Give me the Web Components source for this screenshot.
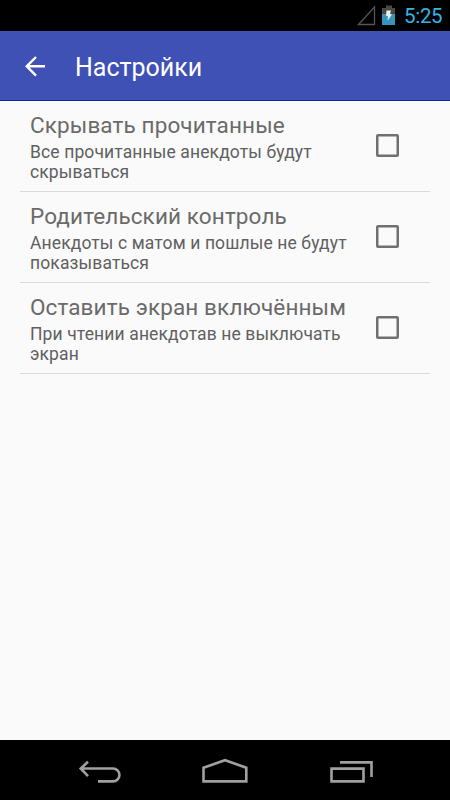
<!DOCTYPE html>
<html lang="ru">
<head>
<meta charset="utf-8">
<title>Настройки</title>
<style>
    html, body {
        margin: 0;
        height: 100%;
    }
    body {
        background-color: #fafafa;
        font-family: Roboto, "Noto Sans", sans-serif;
    }
</style>
</head>
<body>
<settings-screen>
    <status-bar slot="top" time="5:25"></status-bar>
    <app-bar slot="top">Настройки</app-bar>
    <setting-item>
        Скрывать прочитанные
        <span slot="text">Все прочитанные анекдоты будут скрываться</span>
    </setting-item>
    <setting-item>
        Родительский контроль
        <span slot="text">Анекдоты с матом и пошлые не будут показываться</span>
    </setting-item>
    <setting-item>
        Оставить экран включённым
        <span slot="text">При чтении анекдотав не выключать экран</span>
    </setting-item>
    <nav-bar slot="bottom"></nav-bar>
</settings-screen>

<script>
class SettingsScreen extends HTMLElement {
    constructor() {
        super();
        this.attachShadow({mode: "open"});
        this.shadowRoot.innerHTML = `
            <style>
                :host {
                    display: flex;
                    flex-direction: column;
                    height: 100vh;
                    overflow: hidden;
                }
                main {
                    flex: 1;
                    padding: 0 20px;
                }
            </style>
            <slot name="top"></slot>
            <main><slot></slot></main>
            <slot name="bottom"></slot>
        `;
    }
}

class StatusBar extends HTMLElement {
    constructor() {
        super();
        this.attachShadow({mode: "open"});
        this.shadowRoot.innerHTML = `
            <style>
                :host {
                    display: flex;
                    justify-content: flex-end;
                    align-items: center;
                    box-sizing: border-box;
                    height: 31px;
                    padding-right: 8px;
                    background-color: #000;
                    color: #33b5e5;
                }
                svg {
                    display: block;
                }
                .time {
                    width: 38px;
                    margin-left: 9px;
                    font-size: 20.5px;
                    line-height: 31px;
                    padding-top: 2px;
                    letter-spacing: -0.3px;
                }
            </style>
            <svg width="38" height="31" viewBox="357 0 38 31">
                <path d="M358.5 24.5 L374.5 7 V24.5 Z" fill="none" stroke="#555" stroke-width="1.3"/>
                <path d="M386 5.5h6v2.500h3v6h-13v-6h4z" fill="#484848"/>
                <path d="M382 14h13v11h-13z" fill="#3695bd"/>
                <path d="M386.500 10.500h4.500l-1 3.500 2 .4-4.500 6.300.5-4.500-2-.4z" fill="#eee"/>
            </svg>
            <span class="time">${this.getAttribute("time")}</span>
        `;
    }
}

class AppBar extends HTMLElement {
    constructor() {
        super();
        this.attachShadow({mode: "open"});
        this.shadowRoot.innerHTML = `
            <style>
                :host {
                    display: flex;
                    align-items: center;
                    box-sizing: border-box;
                    height: 70px;
                    padding-left: 20px;
                    background-color: #3f51b5;
                    border-bottom: 1px solid #0629ac;
                    color: #fff;
                }
                h1 {
                    margin: 0 0 0 20px;
                    padding-top: 5px;
                    font-size: 25px;
                    line-height: 30px;
                    font-weight: 400;
                    letter-spacing: 0;
                }
            </style>
            <svg width="35" height="30" viewBox="20 51 35 30">
                <path d="M45 66.300H26.500M36 57L26.700 66.300L36 75.600" fill="none" stroke="#fff" stroke-width="2.400"/>
            </svg>
            <h1><slot></slot></h1>
        `;
    }
}

class SettingItem extends HTMLElement {
    constructor() {
        super();
        this.attachShadow({mode: "open"});
        this.shadowRoot.innerHTML = `
            <style>
                :host {
                    display: flex;
                    align-items: center;
                    box-sizing: border-box;
                    height: 91px;
                    padding: 0 31px 0 10px;
                    border-bottom: 1px solid #dadada;
                    color: #6a6a6a;
                }
                .label {
                    flex: 1;
                    min-width: 0;
                    padding: 2px 20px 0 0;
                }
                h2 {
                    margin: 0 0 3px;
                    font-size: 22.5px;
                    line-height: 27px;
                    font-weight: 400;
                    white-space: nowrap;
                    letter-spacing: 0.12px;
                }
                p {
                    margin: 0;
                    color: #606060;
                    font-size: 17.5px;
                    line-height: 20.5px;
                    letter-spacing: 0.12px;
                }
                .box {
                    flex: none;
                    box-sizing: border-box;
                    width: 23px;
                    height: 23px;
                    margin-bottom: 2px;
                    border: 2px solid #707070;
                    border-radius: 2px;
                    box-shadow: inset 0 0 0 0.5px #707070;
                }
            </style>
            <div class="label">
                <h2><slot></slot></h2>
                <p><slot name="text"></slot></p>
            </div>
            <div class="box" role="checkbox" aria-checked="false"></div>
        `;
    }
}

class NavBar extends HTMLElement {
    constructor() {
        super();
        this.attachShadow({mode: "open"});
        this.shadowRoot.innerHTML = `
            <style>
                :host {
                    display: flex;
                    justify-content: center;
                    height: 60px;
                    background-color: #000;
                }
                svg {
                    width: 126px;
                    height: 60px;
                    fill: none;
                    stroke: #a0a0a0;
                    stroke-width: 2.600;
                }
            </style>
            <svg viewBox="36 740 126 60">
                <path d="M81 768.500H113a6.450 6.450 0 0 1 0 12.900H98M88 761.800L80.700 768.500L88 776.200"/>
            </svg>
            <svg viewBox="162 740 126 60">
                <path d="M203.500 781.400V767.700L225 760.200L246.300 767.700V781.400Z"/>
            </svg>
            <svg viewBox="288 740 126 60">
                <path d="M331.500 768.600H363.500V781.400H331.500ZM340 762.400H371.500V777"/>
            </svg>
        `;
    }
}

customElements.define("settings-screen", SettingsScreen);
customElements.define("status-bar", StatusBar);
customElements.define("app-bar", AppBar);
customElements.define("setting-item", SettingItem);
customElements.define("nav-bar", NavBar);
</script>
</body>
</html>
